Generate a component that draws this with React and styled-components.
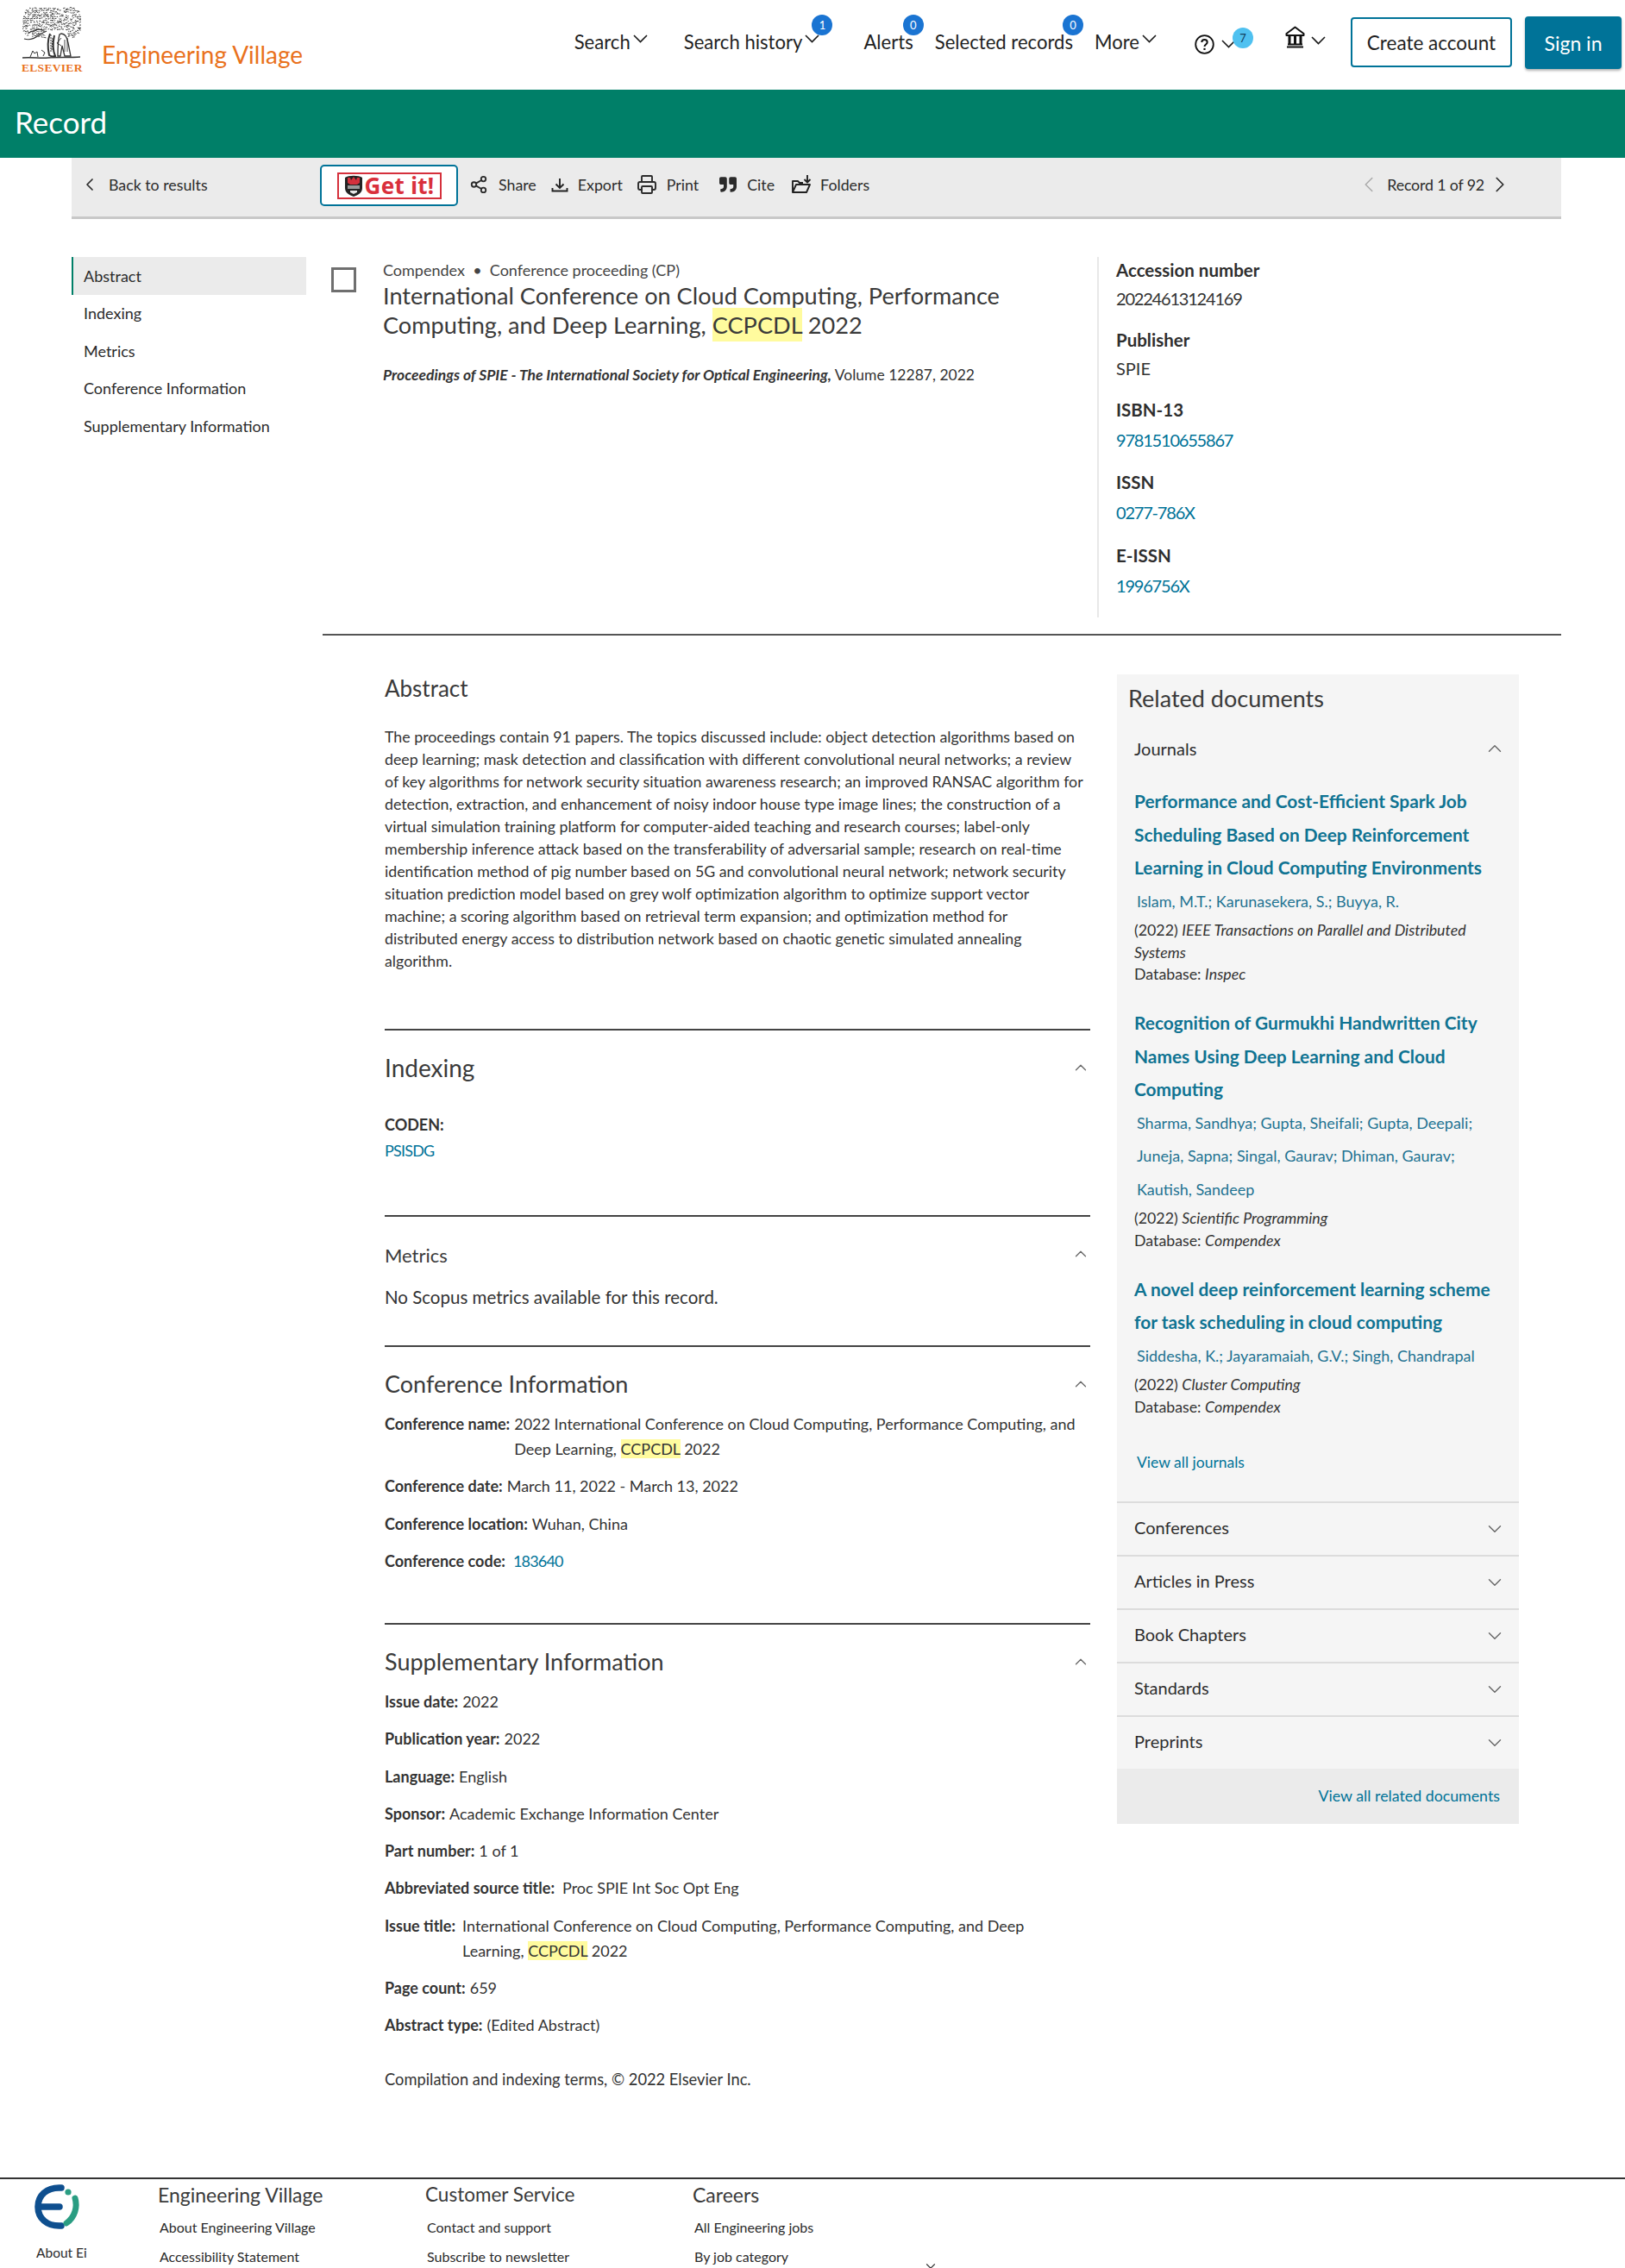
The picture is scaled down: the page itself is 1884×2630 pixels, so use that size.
import React from "react";
import styled, { createGlobalStyle } from "styled-components";
import { ChevronDown, ChevronUp, ChevronLeft, ChevronRight, Share2, Printer } from "lucide-react";
import { FaQuoteRight } from "react-icons/fa";

const Global = createGlobalStyle`
  html, body { margin: 0; padding: 0; background: #fff; }
  body { font-family: Lato, "Noto Sans", sans-serif; color: #2e2e2e; }
  * { box-sizing: border-box; }
`;
const Page = styled.div`width: 1884px; height: 2630px; overflow: hidden; position: relative; background: #fff;`;
const Header = styled.header`height: 104px; display: flex; align-items: flex-start; padding: 0 4px 0 25px;`;
const Logo = styled.div`width: 69px; height: 92px; padding-top: 8px; display: flex; flex-direction: column; align-items: flex-start;`;
const LogoWord = styled.div`font-family: "Liberation Serif", serif; font-weight: 700; font-size: 13.5px; line-height: 14px; margin-top: 2px; color: #e9711c; letter-spacing: .3px; white-space: nowrap;`;
const Brand = styled.div`font-size: 28px; color: #e9711c; line-height: 40px; margin: 43px 0 0 24px;`;
const Nav = styled.nav`margin-left: auto; display: flex; align-items: flex-start;`;
const NavItem = styled.div`position: relative; display: flex; align-items: center; height: 40px; margin-top: ${p => p.$mt ?? 28}px; margin-left: ${p => p.$ml}px; font-size: 22.1px; color: #1f1f1f; white-space: nowrap;`;
const NavChevronSvg = styled.svg`flex: none; margin-left: ${p => p.$ml ?? 3}px; margin-top: ${p => p.$mt ?? -6}px;`;
const NavChevron = ({ ml, mt }) => (
  <NavChevronSvg $ml={ml} $mt={mt} width="17" height="10" viewBox="0 0 17 10" fill="none" stroke="#1a1a1a" strokeWidth="1.6"><path d="M1 1l7.500 7.500L16 1" /></NavChevronSvg>
);
const Badge = styled.span`position: absolute; top: ${p => p.$top ?? -11}px; right: ${p => p.$right}px; width: 24px; height: 24px; border-radius: 50%; background: ${p => p.$light ? "#4fc1f0" : "#1a74d2"}; color: ${p => p.$light ? "#12405e" : "#fff"}; font-size: 13px; display: flex; align-items: center; justify-content: center;`;
const OutlineButton = styled.div`width: 187px; height: 58px; margin: 20px 0 0 29px; border: 2px solid #007398; border-radius: 4px; font-size: 22.5px; color: #1f1f1f; display: flex; align-items: center; justify-content: center;`;
const SolidButton = styled.div`width: 112px; height: 61px; margin: 19px 0 0 15px; border-radius: 4px; background: #007398; color: #fff; font-size: 23px; box-shadow: 0 2px 3px rgba(0,0,0,.3); display: flex; align-items: center; justify-content: center;`;
const Banner = styled.div`height: 79px; background: #007f68; color: #fff; font-size: 35px; padding: 0 0 5px 17px; display: flex; align-items: center;`;
const Toolbar = styled.div`margin: 0 74px 0 83px; height: 71px; background: #ebebeb; border-bottom: 3px solid #c8c8c8; display: flex; align-items: center; font-size: 17.8px; color: #2b2b2b; padding: 0 56px 7px 9px;`;
const BackLink = styled.div`display: flex; align-items: center; gap: 10px; width: 279px;`;
const GetBtn = styled.div`width: 160px; height: 48px; margin-top: 3px; background: #fff; border: 2px solid #007398; border-radius: 5px; display: flex; align-items: center; justify-content: center;`;
const GetInner = styled.div`width: 121px; height: 31px; border: 2px solid #d5303c; display: flex; align-items: center; justify-content: center; gap: 2px; font-family: "Noto Sans", sans-serif; font-weight: 700; font-size: 26px; line-height: 1; color: #d9303c; letter-spacing: .3px;`;
const Tool = styled.div`display: flex; align-items: center; gap: ${p => p.$gap ?? 11}px; margin-left: ${p => p.$ml}px; white-space: nowrap;`;
const Pager = styled.div`margin-left: auto; display: flex; align-items: center; gap: 6px; letter-spacing: -.15px;`;
const PagerNext = styled(ChevronRight)`margin-left: -3px;`;
const Body = styled.div`display: grid; grid-template-columns: 291px 1fr; margin: 0 74px 0 83px;`;
const Side = styled.aside`padding-top: 44px;`;
const SideItem = styled.div`height: 43.5px; width: 272px; display: flex; align-items: center; padding-left: ${p => p.$on ? 12 : 14}px; font-size: 18px; color: #2b2b2b; background: ${p => p.$on ? "#ebebeb" : "transparent"}; border-left: ${p => p.$on ? "2px solid #007f68" : "0"};`;
const Main = styled.main``;
const Top = styled.div`display: flex; padding: 32px 0 20px 10px; border-bottom: 2px solid #555; height: 483px;`;
const Check = styled.div`width: 29px; height: 29px; border: 3px solid #6f6f6f; margin-top: 24px; flex: none;`;
const Title = styled.div`width: 828px; margin-left: 31px; flex: none; padding-top: 15px;`;
const Kicker = styled.div`font-size: 18px; line-height: 24px; color: #444;`;
const H1 = styled.h1`margin: 1px 0 0; font-weight: 400; font-size: 27.15px; line-height: 34px; color: #3a3a3a; width: 760px;`;
const Mark = styled.mark`background: #fffb9e; color: inherit; padding: ${p => p.$tall ? "3px 0" : "0"};`;
const Source = styled.div`margin-top: 29px; font-size: 17.5px; line-height: 24px; color: #333; em { font-weight: 700; }`;
const Meta = styled.dl`margin: 12px 0 0; padding: 0 0 0 20px; height: 418px; border-left: 2px solid #e8e8e8; flex: 1;`;
const MetaBlock = styled.div`margin-bottom: 15.8px;`;
const MetaLabel = styled.dt`font-size: 20.5px; line-height: 31px; font-weight: 700; color: #2e2e2e;`;
const MetaValue = styled.dd`margin: 0; font-size: 20px; line-height: ${p => p.$link ? 38 : 34}px; letter-spacing: ${p => p.$num ? "-1.2px" : "0"}; color: ${p => p.$link ? "#007398" : "#333"};`;
const Lower = styled.div`display: grid; grid-template-columns: 818px 466px; column-gap: 31px; padding-left: 72px; height: 1788px;`;
const Col = styled.div``;
const H2 = styled.h2`margin: 0; font-weight: 400; font-size: ${p => p.$size || 27}px; line-height: 34px; color: #3a3a3a;`;
const AbstractBlock = styled.section`padding-top: 44px; height: 456px;`;
const AbstractText = styled.p`margin: 26px 0 0; width: 811px; font-size: 17.8px; line-height: 26px; color: #333;`;
const Section = styled.section`border-top: 2px solid #444; height: ${p => p.$h}px; padding-top: ${p => p.$pt}px; position: relative;`;
const Caret = styled(ChevronUp)`position: absolute; right: 0; top: ${p => p.$top}px; color: #666;`;
const Spacer = styled.div`height: ${p => p.$h}px;`;
const LabelBlock = styled.div`font-size: 18px; line-height: 30px; margin-top: 34px; color: #333; b { font-weight: 700; }`;
const Para = styled.div`font-size: 20.5px; line-height: 34px; color: #333; margin-top: 14px;`;
const Row = styled.div`display: flex; font-size: 18px; line-height: 29px; margin-bottom: 14.3px; color: #333;`;
const RowLabel = styled.b`font-weight: 700; flex: none; margin-right: ${p => p.$gap ?? 5}px;`;
const RowValue = styled.span`max-width: ${p => p.$max || 700}px;`;
const RowLink = styled.a`color: #007398; letter-spacing: -.8px;`;
const Copyright = styled.div`font-size: 18.3px; line-height: 29px; color: #333; margin-top: 34px;`;
const Panel = styled.aside`background: #f5f5f5; height: 1333px; margin-top: 45px; display: flex; flex-direction: column;`;
const PanelTitle = styled.div`font-size: 27px; line-height: 34px; color: #3a3a3a; padding: 11px 0 0 13px;`;
const JournalHead = styled.div`display: flex; justify-content: space-between; align-items: center; padding: 0 15px 0 20px; height: 36px; margin-top: 23px; font-size: 20px; color: #2e2e2e;`;
const Docs = styled.div`padding: 24px 20px 0 20px; height: 855px;`;
const Doc = styled.div`margin-bottom: 24.5px;`;
const DocTitle = styled.div`font-size: 20.9px; font-weight: 700; line-height: 38.5px; color: #0f7392;`;
const Authors = styled.div`font-size: 18px; line-height: 38.5px; color: #1f7392; padding-left: 3px;`;
const Info = styled.div`font-size: 17.8px; line-height: 25.5px; color: #333; margin-top: 2px;`;
const ViewAll = styled.div`font-size: 17.5px; color: #007398; padding-left: 3px; margin-top: 41px;`;
const Fold = styled.div`height: 62px; border-top: 2px solid #dcdcdc; display: flex; justify-content: space-between; align-items: center; padding: 0 15px 4px 20px; font-size: 20px; color: #2e2e2e; svg { color: #666; margin-top: 3px; }`;
const PanelFoot = styled.div`flex: 1; background: #ebebeb; display: flex; align-items: center; justify-content: flex-end; padding: 0 22px 3px; font-size: 17.8px; color: #007398;`;
const Footer = styled.footer`border-top: 2px solid #333; display: flex; height: 105px; position: relative;`;
const EiCol = styled.div`width: 183px; padding: 6px 0 0 40px;`;
const EiText = styled.div`font-size: 15.5px; margin: 13px 0 0 2px; color: #2b2b2b;`;
const FootCol = styled.div`width: 310px;`;
const FootTitle = styled.div`font-size: ${p => p.$size || 23}px; line-height: 30px; margin-top: 3px; color: #3a3a3a;`;
const FootLink = styled.div`font-size: 16px; line-height: 34px; margin: ${p => p.$first ? 6 : 0}px 0 0 2px; color: #2b2b2b;`;
const FootCaret = styled(ChevronDown)`position: absolute; left: 1070px; top: 92px; color: #333;`;
const HelpSvg = styled.svg`margin-top: 4px; flex: none;`;
const BankSvg = styled.svg`margin-top: -12px; flex: none;`;

function ElsevierTree() {
  const marks = [];
  let seed = 7;
  const rnd = () => { seed = (seed * 16807) % 2147483647; return seed / 2147483647; };
  for (let gy = 1; gy < 36; gy += 2.4) {
    for (let gx = 1; gx < 68; gx += 2.6) {
      const dx = (gx - 34) / 34, dy = (gy - 17) / 19;
      if (dx * dx * dx * dx + dy * dy * dy * dy > 1) continue;
      if (gy > 26 && Math.abs(gx - 40) < 13) continue;
      if (rnd() < 0.16) continue;
      const x = gx + rnd() * 1.2, y = gy + rnd() * 1.2;
      marks.push(`M${x.toFixed(1)} ${y.toFixed(1)}q${(rnd() * 2).toFixed(1)} ${(rnd() * 3 - 1.5).toFixed(1)} ${(1 + rnd() * 2).toFixed(1)} ${(rnd() * 2 - 1).toFixed(1)}`);
    }
  }
  return (
    <svg width="69" height="62" viewBox="0 0 69 62" fill="none" stroke="#333">
      <path d={marks.join("")} strokeWidth="1" />
      <path d="M8 30l10-4 8 1M3 37c6 2 12 0 18-5 3-2 6-3 8-4" strokeWidth="1.200" />
      <path d="M33 31c-3 8-3 16-1 25 3 2 5 2 7 1-3-7-3-15-1-24" strokeWidth="2" />
      <path d="M34 32v20M36 36l-1 14" strokeWidth="1" strokeDasharray="2 1" />
      <path d="M46 31c5 0 7 5 8 11l3 15h-7l-3-12-2 12h-3c0-8 0-18 2-25z" strokeWidth="1.300" />
      <path d="M46 36l-5 6 5 3M50 38v14M53 36v16" strokeWidth=".9" />
      <path d="M10 58l3-7 2 3 3-2 1 6M23 50l4 3-2 4" strokeWidth="1" />
      <path d="M1 59c12-1 20 1 30 0s25 0 37-1" strokeWidth="1.400" />
    </svg>
  );
}
const Shield = () => (
  <svg width="22" height="27" viewBox="0 0 22 27">
    <path d="M1 4c4-3 16-3 20 0v12c0 6-5 8-10 10C6 24 1 22 1 16z" fill="#232323" />
    <path d="M4 4h3l1 3 3-4 3 4 1-3h3v6l-3 2H7l-3-2z" fill="#d5303c" />
    <path d="M4 13h14v4H4z" fill="#9a9a9a" />
    <path d="M7 19h8v2l-4 2-4-2z" fill="#e6e6e6" />
  </svg>
);
const ExportIcon = () => (
  <svg width="20" height="20" viewBox="0 0 20 20" fill="none" stroke="#222" strokeWidth="1.900"><path d="M10 3v11M5.500 9.500L10 14l4.500-4.500M1.500 14v3.500h17V14" /></svg>
);
const FolderIcon = () => (
  <svg width="24" height="24" viewBox="0 0 24 24" fill="none" stroke="#222" strokeWidth="1.900" strokeLinejoin="round"><path d="M2 21V8h6l2 2h4M2 21l4-9h16l-4 9zM19 1v8M15.500 6L19 9.500 22.500 6" /></svg>
);
const Help = () => (
  <HelpSvg width="23" height="23" viewBox="0 0 23 23" fill="none" stroke="#111" strokeWidth="1.800"><circle cx="11.500" cy="11.500" r="10.300" /><path d="M8.300 9c0-4 6.400-4 6.400 0 0 2.600-3.200 2.400-3.200 5" strokeWidth="2" /><path d="M11.500 15.800v2.200" strokeWidth="2.200" /></HelpSvg>
);
const Bank = () => (
  <BankSvg width="23" height="26" viewBox="0 0 23 26" fill="none" stroke="#111" strokeWidth="2"><path d="M11.500 1.500L1.500 9v2h20V9zM2 24.500h19" strokeLinejoin="round" /><path d="M5 11v10.500M11.500 11v10.500M18 11v10.500" strokeWidth="3" /><path d="M3 21.500h17" /></BankSvg>
);
const EiLogo = () => (
  <svg width="54" height="54" viewBox="0 0 54 54" fill="none">
    <path d="M31 4C14 3 4 13 4 26s10 23 27 22" stroke="#0e4f8f" strokeWidth="7.500" strokeLinecap="round" />
    <path d="M5 26h24" stroke="#0e4f8f" strokeWidth="7.500" strokeLinecap="round" />
    <circle cx="39" cy="9" r="3.600" fill="#2a9d82" />
    <path d="M47 16c3 10 0 22-10 29" stroke="#2a9d82" strokeWidth="7" strokeLinecap="round" />
  </svg>
);
const FoldChevron = () => <ChevronDown size={26} strokeWidth={1.3} />;
const SectionCaret = () => <Caret $top={32} size={22} strokeWidth={1.4} />;

export default function App() {
  return (
    <Page>
      <Global />
      <Header>
        <Logo><ElsevierTree /><LogoWord>ELSEVIER</LogoWord></Logo>
        <Brand>Engineering Village</Brand>
        <Nav>
          <NavItem $ml={0}>Search<NavChevron /></NavItem>
          <NavItem $ml={42}>Search history<NavChevron /><Badge $right={-15}>1</Badge></NavItem>
          <NavItem $ml={51}>Alerts<Badge $right={-12}>0</Badge></NavItem>
          <NavItem $ml={25}>Selected records<Badge $right={-12}>0</Badge></NavItem>
          <NavItem $ml={25}>More<NavChevron /></NavItem>
          <NavItem $ml={44} $mt={29}><Help /><NavChevron ml={8} mt={4} /><Badge $light $top={3} $right={-20}>7</Badge></NavItem>
          <NavItem $ml={57} $mt={29}><Bank /><NavChevron ml={7} mt={-5} /></NavItem>
          <OutlineButton>Create account</OutlineButton>
          <SolidButton>Sign in</SolidButton>
        </Nav>
      </Header>
      <Banner>Record</Banner>
      <Toolbar>
        <BackLink><ChevronLeft size={24} strokeWidth={1.7} />Back to results</BackLink>
        <GetBtn><GetInner><Shield />Get it!</GetInner></GetBtn>
        <Tool $ml={13} $gap={12}><Share2 size={22} strokeWidth={2} />Share</Tool>
        <Tool $ml={17}><ExportIcon />Export</Tool>
        <Tool $ml={16}><Printer size={24} strokeWidth={1.9} />Print</Tool>
        <Tool $ml={24} $gap={12}><FaQuoteRight size={20} />Cite</Tool>
        <Tool $ml={19} $gap={10}><FolderIcon />Folders</Tool>
        <Pager><ChevronLeft size={30} strokeWidth={1.2} color="#aaa" />Record 1 of 92<PagerNext size={30} strokeWidth={1.4} /></Pager>
      </Toolbar>
      <Body>
        <Side>
          <SideItem $on>Abstract</SideItem>
          <SideItem>Indexing</SideItem>
          <SideItem>Metrics</SideItem>
          <SideItem>Conference Information</SideItem>
          <SideItem>Supplementary Information</SideItem>
        </Side>
        <Main>
          <Top>
            <Check />
            <Title>
              <Kicker>Compendex &nbsp;•&nbsp; Conference proceeding (CP)</Kicker>
              <H1>International Conference on Cloud Computing, Performance Computing, and Deep Learning, <Mark $tall>CCPCDL</Mark> 2022</H1>
              <Source><em>Proceedings of SPIE - The International Society for Optical Engineering,</em> Volume 12287, 2022</Source>
            </Title>
            <Meta>
              <MetaBlock><MetaLabel>Accession number</MetaLabel><MetaValue $num>20224613124169</MetaValue></MetaBlock>
              <MetaBlock><MetaLabel>Publisher</MetaLabel><MetaValue>SPIE</MetaValue></MetaBlock>
              <MetaBlock><MetaLabel>ISBN-13</MetaLabel><MetaValue $link $num>9781510655867</MetaValue></MetaBlock>
              <MetaBlock><MetaLabel>ISSN</MetaLabel><MetaValue $link $num>0277-786X</MetaValue></MetaBlock>
              <MetaBlock><MetaLabel>E-ISSN</MetaLabel><MetaValue $link $num>1996756X</MetaValue></MetaBlock>
            </Meta>
          </Top>
          <Lower>
            <Col>
              <AbstractBlock>
                <H2 $size={26}>Abstract</H2>
                <AbstractText>The proceedings contain 91 papers. The topics discussed include: object detection algorithms based on deep learning; mask detection and classification with different convolutional neural networks; a review of key algorithms for network security situation awareness research; an improved RANSAC algorithm for detection, extraction, and enhancement of noisy indoor house type image lines; the construction of a virtual simulation training platform for computer-aided teaching and research courses; label-only membership inference attack based on the transferability of adversarial sample; research on real-time identification method of pig number based on 5G and convolutional neural network; network security situation prediction model based on grey wolf optimization algorithm to optimize support vector machine; a scoring algorithm based on retrieval term expansion; and optimization method for distributed energy access to distribution network based on chaotic genetic simulated annealing algorithm.</AbstractText>
              </AbstractBlock>
              <Section $h={216} $pt={26}>
                <H2 $size={28}>Indexing</H2>
                <SectionCaret />
                <LabelBlock><b>CODEN:</b><br /><RowLink>PSISDG</RowLink></LabelBlock>
              </Section>
              <Section $h={151} $pt={28}>
                <H2 $size={22}>Metrics</H2>
                <SectionCaret />
                <Para>No Scopus metrics available for this record.</Para>
              </Section>
              <Section $h={322} $pt={26}>
                <H2 $size={27}>Conference Information</H2>
                <SectionCaret />
                <Spacer $h={15} />
                <Row><RowLabel>Conference name:</RowLabel><RowValue>2022 International Conference on Cloud Computing, Performance Computing, and Deep Learning, <Mark>CCPCDL</Mark> 2022</RowValue></Row>
                <Row><RowLabel>Conference date:</RowLabel><RowValue>March 11, 2022 - March 13, 2022</RowValue></Row>
                <Row><RowLabel>Conference location:</RowLabel><RowValue>Wuhan, China</RowValue></Row>
                <Row><RowLabel $gap={9}>Conference code:</RowLabel><RowLink>183640</RowLink></Row>
              </Section>
              <Section $h={500} $pt={26}>
                <H2 $size={27}>Supplementary Information</H2>
                <SectionCaret />
                <Spacer $h={15} />
                <Row><RowLabel>Issue date:</RowLabel><RowValue>2022</RowValue></Row>
                <Row><RowLabel>Publication year:</RowLabel><RowValue>2022</RowValue></Row>
                <Row><RowLabel>Language:</RowLabel><RowValue>English</RowValue></Row>
                <Row><RowLabel>Sponsor:</RowLabel><RowValue>Academic Exchange Information Center</RowValue></Row>
                <Row><RowLabel>Part number:</RowLabel><RowValue>1 of 1</RowValue></Row>
                <Row><RowLabel $gap={9}>Abbreviated source title:</RowLabel><RowValue>Proc SPIE Int Soc Opt Eng</RowValue></Row>
                <Row><RowLabel $gap={8}>Issue title:</RowLabel><RowValue $max={660}>International Conference on Cloud Computing, Performance Computing, and Deep Learning, <Mark>CCPCDL</Mark> 2022</RowValue></Row>
                <Row><RowLabel>Page count:</RowLabel><RowValue>659</RowValue></Row>
                <Row><RowLabel>Abstract type:</RowLabel><RowValue>(Edited Abstract)</RowValue></Row>
                <Copyright>Compilation and indexing terms, © 2022 Elsevier Inc.</Copyright>
              </Section>
            </Col>
            <Panel>
              <PanelTitle>Related documents</PanelTitle>
              <JournalHead>Journals<ChevronUp size={26} strokeWidth={1.3} color="#666" /></JournalHead>
              <Docs>
                <Doc>
                  <DocTitle>Performance and Cost-Efficient Spark Job Scheduling Based on Deep Reinforcement Learning in Cloud Computing Environments</DocTitle>
                  <Authors>Islam, M.T.; Karunasekera, S.; Buyya, R.</Authors>
                  <Info>(2022) <i>IEEE Transactions on Parallel and Distributed Systems</i><br />Database: <i>Inspec</i></Info>
                </Doc>
                <Doc>
                  <DocTitle>Recognition of Gurmukhi Handwritten City Names Using Deep Learning and Cloud Computing</DocTitle>
                  <Authors>Sharma, Sandhya; Gupta, Sheifali; Gupta, Deepali; Juneja, Sapna; Singal, Gaurav; Dhiman, Gaurav; Kautish, Sandeep</Authors>
                  <Info>(2022) <i>Scientific Programming</i><br />Database: <i>Compendex</i></Info>
                </Doc>
                <Doc>
                  <DocTitle>A novel deep reinforcement learning scheme for task scheduling in cloud computing</DocTitle>
                  <Authors>Siddesha, K.; Jayaramaiah, G.V.; Singh, Chandrapal</Authors>
                  <Info>(2022) <i>Cluster Computing</i><br />Database: <i>Compendex</i></Info>
                </Doc>
                <ViewAll>View all journals</ViewAll>
              </Docs>
              {["Conferences", "Articles in Press", "Book Chapters", "Standards", "Preprints"].map(t => (
                <Fold key={t}>{t}<FoldChevron /></Fold>
              ))}
              <PanelFoot>View all related documents</PanelFoot>
            </Panel>
          </Lower>
        </Main>
      </Body>
      <Footer>
        <EiCol><EiLogo /><EiText>About Ei</EiText></EiCol>
        <FootCol><FootTitle>Engineering Village</FootTitle><FootLink $first>About Engineering Village</FootLink><FootLink>Accessibility Statement</FootLink></FootCol>
        <FootCol><FootTitle $size={22.5}>Customer Service</FootTitle><FootLink $first>Contact and support</FootLink><FootLink>Subscribe to newsletter</FootLink></FootCol>
        <FootCol><FootTitle>Careers</FootTitle><FootLink $first>All Engineering jobs</FootLink><FootLink>By job category</FootLink></FootCol>
        <FootCaret size={18} strokeWidth={1.5} />
      </Footer>
    </Page>
  );
}
